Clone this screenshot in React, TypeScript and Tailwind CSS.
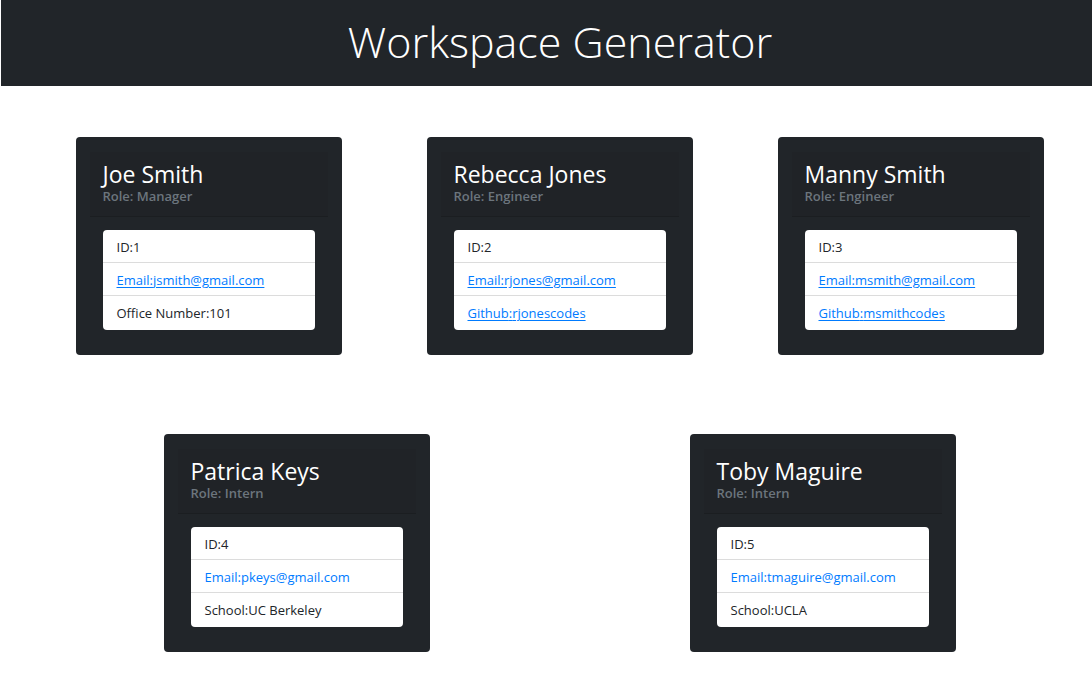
import React from "react";

type Member = {
  name: string;
  role: string;
  id: number;
  email: string;
  extra: { label: string; value: string; link: boolean };
  underline: boolean;
};

const TOP_ROW: Member[] = [
  {
    name: "Joe Smith",
    role: "Manager",
    id: 1,
    email: "jsmith@gmail.com",
    extra: { label: "Office Number", value: "101", link: false },
    underline: true,
  },
  {
    name: "Rebecca Jones",
    role: "Engineer",
    id: 2,
    email: "rjones@gmail.com",
    extra: { label: "Github", value: "rjonescodes", link: true },
    underline: true,
  },
  {
    name: "Manny Smith",
    role: "Engineer",
    id: 3,
    email: "msmith@gmail.com",
    extra: { label: "Github", value: "msmithcodes", link: true },
    underline: true,
  },
];

const BOTTOM_ROW: Member[] = [
  {
    name: "Patrica Keys",
    role: "Intern",
    id: 4,
    email: "pkeys@gmail.com",
    extra: { label: "School", value: "UC Berkeley", link: false },
    underline: false,
  },
  {
    name: "Toby Maguire",
    role: "Intern",
    id: 5,
    email: "tmaguire@gmail.com",
    extra: { label: "School", value: "UCLA", link: false },
    underline: false,
  },
];

function MemberCard({ member }: { member: Member }) {
  const linkClass = member.underline
    ? "text-[#007bff] underline underline-offset-2"
    : "text-[#007bff]";
  return (
    <div className="w-[266px] h-[218px] rounded-[4px] bg-[#212529] px-[14px] pt-[15px]">
      {/* Header */}
      <div className="h-[65px] bg-[#202327] border-b border-[#1b1e21] pl-[13px] pt-[10px]">
        <h4 className="text-[23px] leading-[24px] text-white">{member.name}</h4>
        <p className="mt-[3px] text-[13px] leading-[14px] font-semibold text-[#6c757d]">
          Role: {member.role}
        </p>
      </div>

      {/* Info list */}
      <ul className="mx-[13px] mt-[13px] rounded-[4px] bg-white text-[13px] text-[#212529]">
        <li className="h-[33px] flex items-center px-[14px] pt-[3px] border-b border-[#dcdcdc]">
          ID:{member.id}
        </li>
        <li className="h-[33px] flex items-center px-[14px] pt-[3px] border-b border-[#dcdcdc]">
          <a href="#" className={linkClass}>
            Email:{member.email}
          </a>
        </li>
        <li className="h-[34px] flex items-center px-[14px] pt-[2px]">
          {member.extra.link ? (
            <a href="#" className={linkClass}>
              {member.extra.label}:{member.extra.value}
            </a>
          ) : (
            <span>
              {member.extra.label}:{member.extra.value}
            </span>
          )}
        </li>
      </ul>
    </div>
  );
}

export default function App() {
  return (
    <div
      className="min-h-screen bg-white"
      style={{ fontFamily: '"Open Sans", "Noto Sans", sans-serif' }}
    >
      <header className="h-[86px] bg-[#212529] ml-px flex items-center justify-center pl-[27px]">
        <h1 className="text-[43px] font-light text-white leading-none pb-[4px]">
          Workspace Generator
        </h1>
      </header>

      <main className="pl-[27px]">
        <div className="flex justify-center gap-[85px] pt-[51px]">
          {TOP_ROW.map((m) => (
            <MemberCard key={m.name} member={m} />
          ))}
        </div>
        <div className="flex justify-center gap-[260px] pt-[79px]">
          {BOTTOM_ROW.map((m) => (
            <MemberCard key={m.name} member={m} />
          ))}
        </div>
      </main>
    </div>
  );
}
